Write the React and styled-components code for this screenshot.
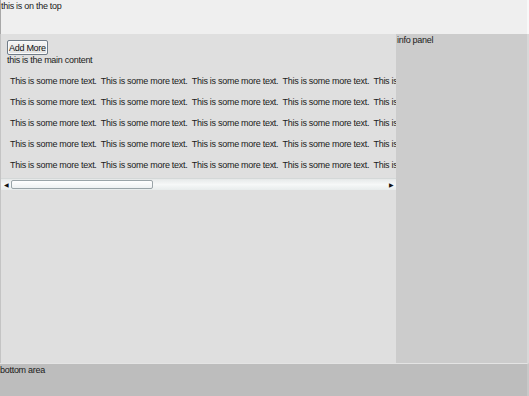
import React from "react";
import styled, { createGlobalStyle } from "styled-components";

const GlobalStyle = createGlobalStyle`
  html, body {
    margin: 0;
    padding: 0;
  }
  body {
    font-family: "Liberation Sans", Arial, sans-serif;
    font-size: 9px;
    letter-spacing: -0.28px;
    color: #1a1a1a;
  }
`;

const Page = styled.div`
  display: flex;
  flex-direction: column;
  width: 529px;
  height: 396px;
  overflow: hidden;
`;

const TopBar = styled.div`
  height: 34px;
  background: #efefef;
  border-left: 1px solid #a8a8a8;
  border-right: 2px solid #f8f8f8;
  box-sizing: border-box;
  padding: 1px 0 0 0;
  line-height: 10px;
`;

const Middle = styled.div`
  display: flex;
  flex: 1;
  min-height: 0;
`;

const Main = styled.div`
  width: 396px;
  background: #dfdfdf;
  border-left: 1px solid #c4c4c4;
  box-sizing: border-box;
  padding-top: 6px;
  display: flex;
  flex-direction: column;
`;

const Button = styled.button`
  align-self: flex-start;
  margin-left: 6px;
  height: 15px;
  padding: 0 1px;
  font-family: inherit;
  font-size: 9px;
  letter-spacing: -0.28px;
  color: #111;
  border: 1px solid #707c88;
  border-radius: 2px;
  background: linear-gradient(#f6f6f6, #e2e2e2);
  box-shadow: inset 0 0 0 1px #fafafa;
  line-height: 12px;
`;

const Label = styled.div`
  margin-left: 6px;
  line-height: 10px;
`;

const Rows = styled.div`
  margin-top: 6px;
  overflow: hidden;
`;

const Row = styled.div`
  height: 21px;
  line-height: 21px;
  padding-left: 9px;
  white-space: pre;
`;

const Scrollbar = styled.div`
  display: flex;
  align-items: center;
  height: 11px;
  margin-top: 2px;
  background: linear-gradient(#e6e9e9, #f6f8f8 50%, #e8ecec);
  border-top: 1px solid #d4d8d8;
`;

const Arrow = styled.div`
  width: 10px;
  display: flex;
  justify-content: center;
  font-size: 6px;
  color: #111;
`;

const Track = styled.div`
  flex: 1;
  height: 9px;
  display: flex;
`;

const Thumb = styled.div`
  width: 142px;
  height: 9px;
  box-sizing: border-box;
  border: 1px solid #9aa4a8;
  border-radius: 2px;
  background: linear-gradient(#ffffff, #eef1f2);
`;

const Info = styled.div`
  flex: 1;
  background: #cccccc;
  border-right: 2px solid #d8d8d8;
  padding: 1px 0 0 1px;
  line-height: 10px;
`;

const Bottom = styled.div`
  height: 33px;
  background: #bdbdbd;
  border-top: 1px solid #e4e4e4;
  border-right: 2px solid #c8c8c8;
  line-height: 10px;
  padding-top: 1px;
  box-sizing: border-box;
`;

const phrase = "This is some more text.  ";

export default function App() {
  const rows = [0, 1, 2, 3, 4];
  return (
    <>
      <GlobalStyle />
      <Page>
        <TopBar>this is on the top</TopBar>
        <Middle>
          <Main>
            <Button>Add More</Button>
            <Label>this is the main content</Label>
            <Rows>
              {rows.map((r) => (
                <Row key={r}>{phrase.repeat(6)}</Row>
              ))}
            </Rows>
            <Scrollbar>
              <Arrow>◀</Arrow>
              <Track>
                <Thumb />
              </Track>
              <Arrow>▶</Arrow>
            </Scrollbar>
          </Main>
          <Info>info panel</Info>
        </Middle>
        <Bottom>bottom area</Bottom>
      </Page>
    </>
  );
}
